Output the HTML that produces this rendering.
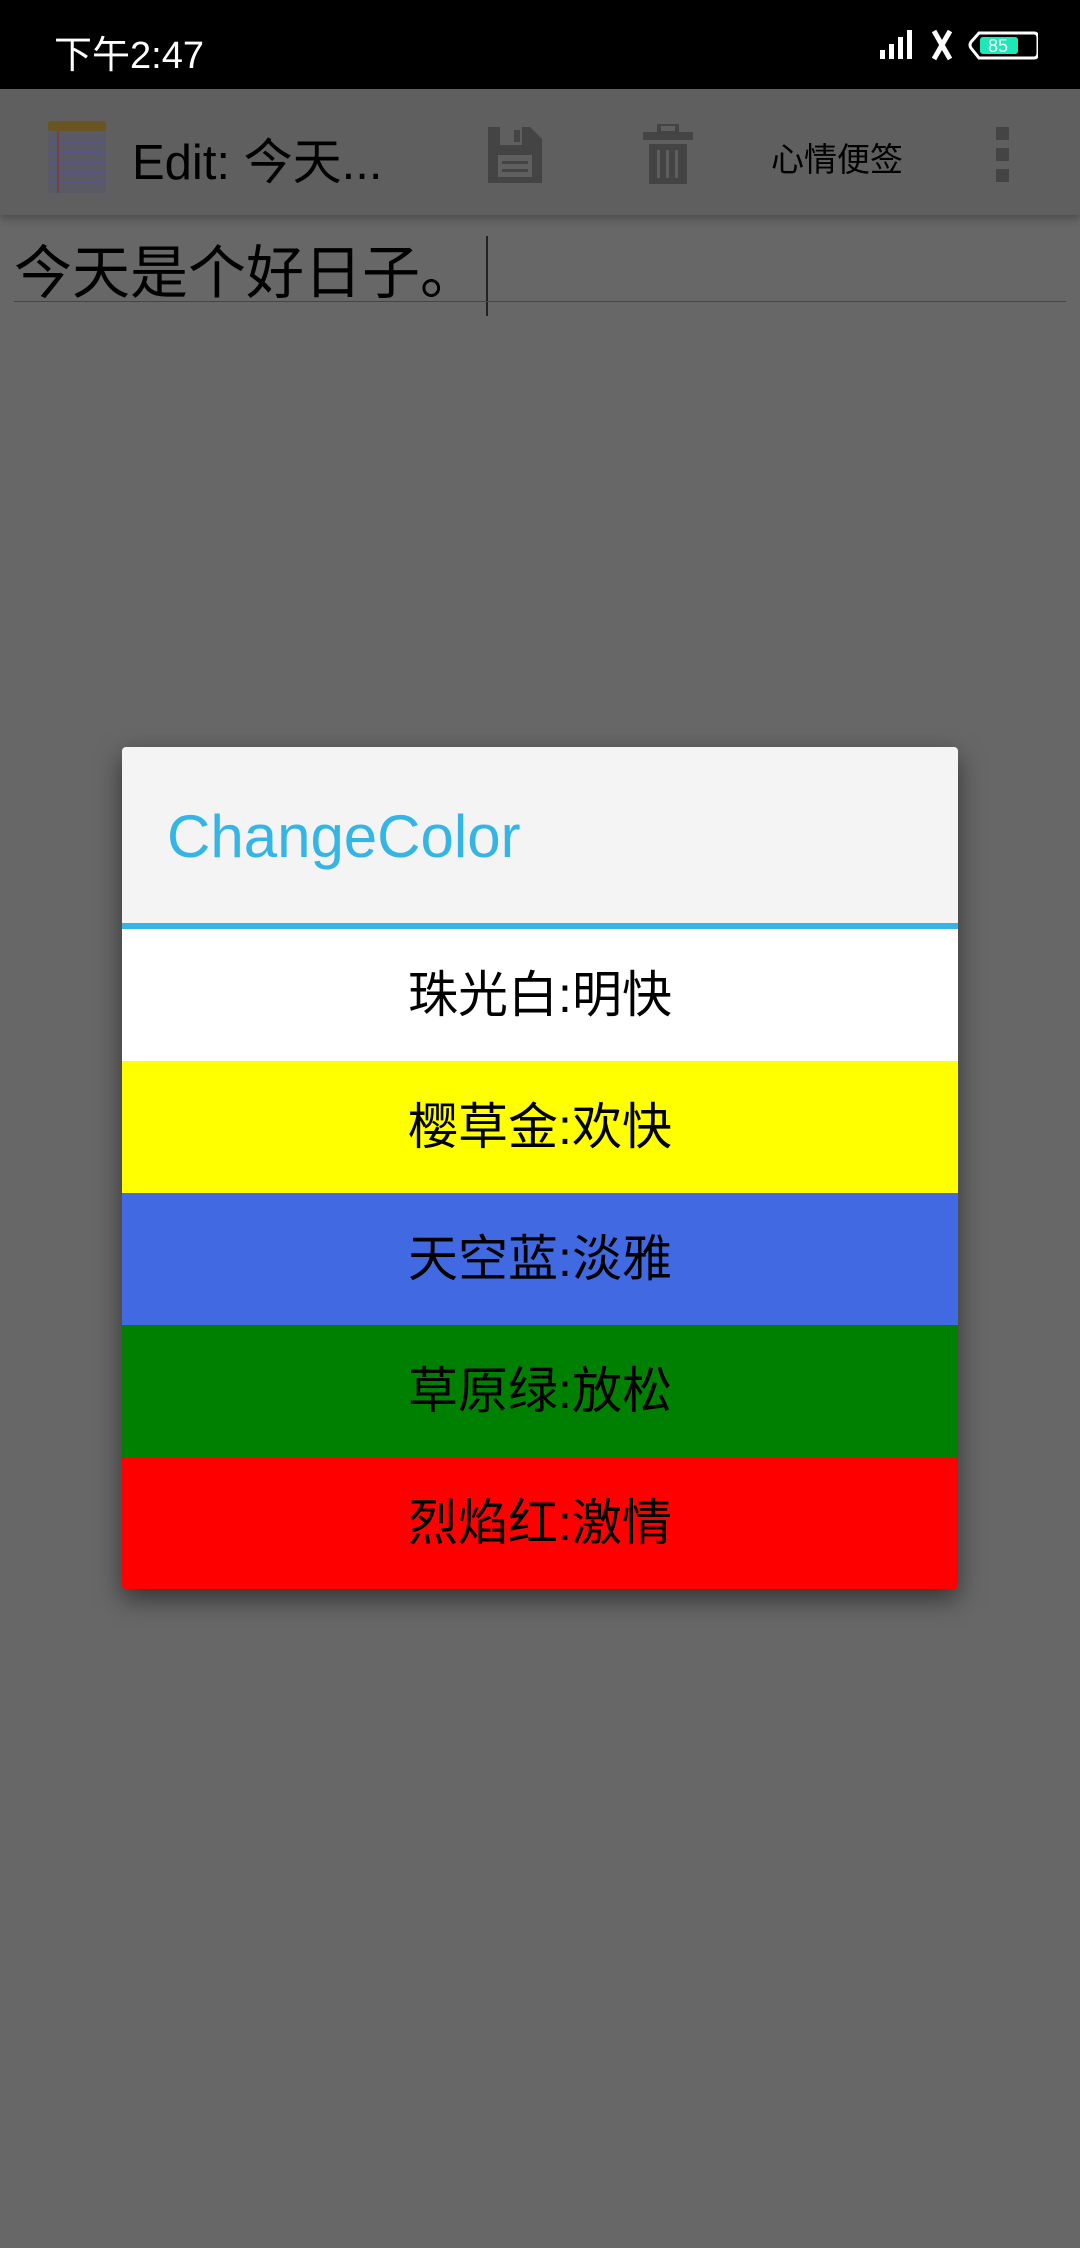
<!DOCTYPE html>
<html><head><meta charset="utf-8"><style>
body{margin:0;width:1080px;height:2248px;background:#676767;position:relative;overflow:hidden;font-family:"Liberation Sans","Noto Sans CJK SC",sans-serif}
.sb{position:absolute;left:0;top:0;width:1080px;height:89px;background:#000;color:#fff}
.tb{position:absolute;left:0;top:89px;width:1080px;height:126px;background:#5f5f5f;box-shadow:0 4px 8px rgba(0,0,0,.25)}
.dlg{position:absolute;left:122px;top:747px;width:836px;height:842px;box-shadow:0 10px 25px rgba(0,0,0,.5);border-radius:4px;overflow:hidden}
.row{height:132px;line-height:132px;text-align:center;font-size:50px;color:#000}
</style></head><body>
<div class="sb">
<div style="position:absolute;left:54px;top:24px;font-size:38px">下午2:47</div>
<svg style="position:absolute;left:878px;top:28px" width="160" height="34" viewBox="0 0 160 34">
<rect x="2" y="22" width="5" height="9" fill="#fff"/><rect x="11" y="16" width="5" height="15" fill="#fff"/><rect x="20" y="9" width="5" height="22" fill="#fff"/><rect x="29" y="2" width="5" height="29" fill="#fff"/>
<path d="M56 3 L72 31 M72 3 L56 31" stroke="#fff" stroke-width="5"/>
<path d="M101 5 H156 Q160 5 160 10 V25 Q160 30 156 30 H101 L93 20 Q91 17 93 14 Z" fill="none" stroke="#fff" stroke-width="3"/>
<rect x="102" y="9" width="38" height="17" rx="3" fill="#1de9b6"/>
<text x="120" y="24" font-size="18" fill="#fff" text-anchor="middle" font-family="Liberation Sans">85</text>
</svg>
</div>
<div class="tb">
<svg style="position:absolute;left:47px;top:30px" width="60" height="76"><rect x="1" y="2" width="58" height="72" rx="4" fill="#5a5a66"/><rect x="1" y="2" width="58" height="10" rx="3" fill="#6a5522"/><g stroke="#55558a" stroke-width="2"><line x1="2" y1="24" x2="58" y2="24"/><line x1="2" y1="34" x2="58" y2="34"/><line x1="2" y1="44" x2="58" y2="44"/><line x1="2" y1="54" x2="58" y2="54"/><line x1="2" y1="64" x2="58" y2="64"/></g><line x1="11" y1="12" x2="11" y2="74" stroke="#7a3a3a" stroke-width="1.5"/></svg>
<div style="position:absolute;left:132px;top:34px;font-size:49px;color:#000">Edit: 今天...</div>
<svg style="position:absolute;left:488px;top:38px" width="54" height="56"><path d="M0 0 H42 L54 12 V56 H0 Z" fill="#444"/><rect x="12" y="0" width="22" height="18" fill="#5f5f5f"/><rect x="26" y="3" width="6" height="12" fill="#444"/><rect x="10" y="28" width="34" height="22" fill="#5f5f5f"/><rect x="14" y="34" width="26" height="3" fill="#444"/><rect x="14" y="42" width="26" height="3" fill="#444"/></svg>
<svg style="position:absolute;left:643px;top:35px" width="50" height="60"><rect x="0" y="8" width="50" height="8" fill="#444"/><rect x="16" y="0" width="18" height="9" fill="none" stroke="#444" stroke-width="4"/><rect x="6" y="20" width="38" height="40" fill="#444"/><rect x="14" y="26" width="3" height="28" fill="#5f5f5f"/><rect x="23" y="26" width="3" height="28" fill="#5f5f5f"/><rect x="32" y="26" width="3" height="28" fill="#5f5f5f"/></svg>
<div style="position:absolute;left:771px;top:44px;font-size:33px;color:#000">心情便签</div>
<div style="position:absolute;left:996px;top:38px;width:13px;height:55px;background:repeating-linear-gradient(#444 0 13px,transparent 13px 21px)"></div>
</div>
<div style="position:absolute;left:14px;top:241px;font-size:58px;color:#000;line-height:66px">今天是个好日子。</div>
<div style="position:absolute;left:486px;top:236px;width:2px;height:80px;background:#222"></div>
<div style="position:absolute;left:14px;top:301px;width:1052px;height:1px;background:#3d3d80"></div>
<div class="dlg">
<div style="height:176px;background:#f4f4f4;position:relative"><div style="position:absolute;left:45px;top:55px;font-size:60px;color:#33b5e5">ChangeColor</div></div>
<div style="height:6px;background:#33b5e5"></div>
<div class="row" style="background:#fff">珠光白:明快</div>
<div class="row" style="background:#ffff00">樱草金:欢快</div>
<div class="row" style="background:#4169e1">天空蓝:淡雅</div>
<div class="row" style="background:#008000">草原绿:放松</div>
<div class="row" style="background:#ff0000">烈焰红:激情</div>
</div>
</body></html>
